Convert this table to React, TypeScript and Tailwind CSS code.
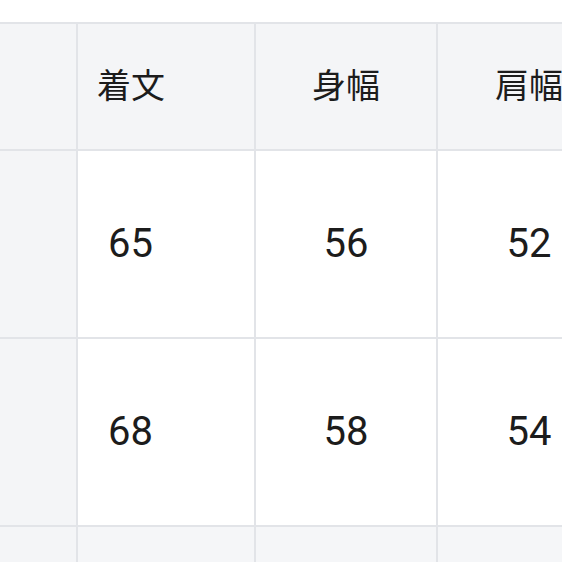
import React from 'react';

const headers = ['着文', '身幅', '肩幅'];
const rows = [
    ['65', '56', '52'],
    ['68', '58', '54'],
];

const font = { fontFamily: 'Roboto, "Noto Sans CJK JP", sans-serif' };

export default function App() {
    return (
        <div className="w-[562px] h-[562px] overflow-hidden bg-white pt-[22px]" style={font}>
            <div className="grid grid-cols-[76px_176px_180px_182px] grid-rows-[125px_186px_186px_60px] gap-[2px] w-[620px] border-t-2 border-[#e2e4e8] bg-[#e2e4e8] text-[#1c1c1c]">
                {/* Header */}
                <div className="bg-[#f4f5f7]" />
                {headers.map((h, i) => (
                    <div
                        key={h}
                        className={`bg-[#f4f5f7] flex items-center text-[34px] ${i === 0 ? 'pl-[19px]' : 'justify-center'}`}
                    >
                        {h}
                    </div>
                ))}

                {/* Data rows */}
                {rows.map((r, ri) => (
                    <React.Fragment key={ri}>
                        <div className="bg-[#f4f5f7]" />
                        {r.map((v, i) => (
                            <div
                                key={i}
                                className={`bg-white flex items-center text-[40px] ${i === 0 ? 'pl-[30px]' : 'justify-center'}`}
                            >
                                {v}
                            </div>
                        ))}
                    </React.Fragment>
                ))}

                {/* Next row, cut off */}
                <div className="bg-[#f4f5f7]" />
                <div className="bg-[#f5f6f8]" />
                <div className="bg-[#f5f6f8]" />
                <div className="bg-[#f5f6f8]" />
            </div>
        </div>
    );
}
